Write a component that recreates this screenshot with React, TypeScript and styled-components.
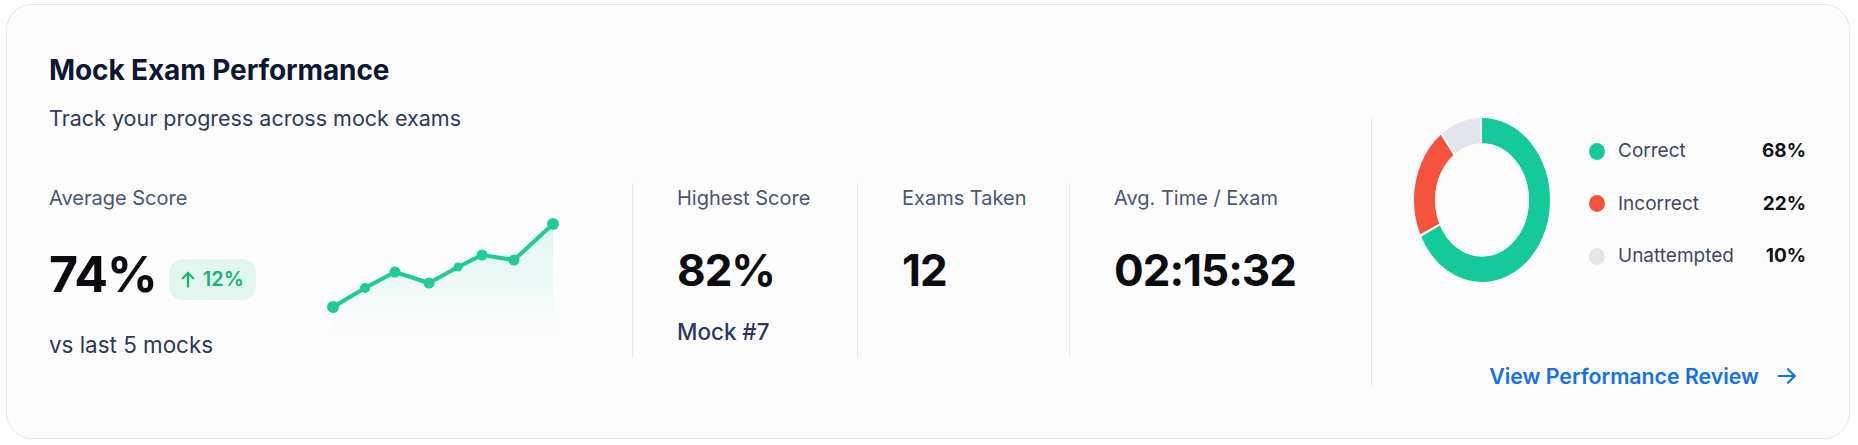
import React from "react";
import styled, { createGlobalStyle } from "styled-components";

const GlobalStyle = createGlobalStyle`
  html, body {
    margin: 0;
    padding: 0;
    background: #ffffff;
  }
  body {
    font-family: Inter, "Noto Sans", sans-serif;
    -webkit-font-smoothing: antialiased;
  }
`;

const Card = styled.section`
  box-sizing: border-box;
  margin: 4px 8px 0 6px;
  height: 435px;
  border: 1px solid #e1e8f2;
  border-radius: 26px;
  background: #fdfdfe;
  display: flex;
  padding: 48px 43px 0 42px;
`;

const Main = styled.div`
  flex: 1;
  display: flex;
  flex-direction: column;
  min-width: 0;
`;

const Title = styled.h2`
  margin: 0;
  font-size: 28px;
  line-height: 34px;
  font-weight: 700;
  color: #0f1631;
  letter-spacing: -0.1px;
`;

const Subtitle = styled.p`
  margin: 18px 0 0;
  font-size: 21.5px;
  line-height: 26px;
  font-weight: 400;
  color: #2e3a56;
`;

const Metrics = styled.div`
  margin-top: 52px;
  height: 168px;
  display: grid;
  grid-template-columns: 583px 225px 212px 1fr;
`;

const Stat = styled.div<{ $divided?: boolean }>`
  box-sizing: border-box;
  padding-top: 3px;
  padding-left: ${(p) => (p.$divided ? "44px" : "0")};
  border-left: ${(p) => (p.$divided ? "1px solid #e6eaf0" : "none")};
  display: flex;
  flex-direction: column;
`;

const AverageStat = styled.div`
  display: flex;
  align-items: flex-start;
`;

const AverageText = styled.div`
  width: 271px;
  padding-top: 3px;
  display: flex;
  flex-direction: column;
`;

const Label = styled.div`
  font-size: 20px;
  line-height: 24px;
  color: #4b5670;
`;

const Value = styled.div<{ $size: number; $lh: number }>`
  margin-top: 36px;
  font-size: ${(p) => p.$size}px;
  line-height: ${(p) => p.$lh}px;
  font-weight: 700;
  color: #0b0c10;
  letter-spacing: -1px;
`;

const ValueRow = styled.div`
  margin-top: 36px;
  display: flex;
  align-items: center;
  gap: 12px;
`;

const Badge = styled.span`
  margin-top: 10px;
  height: 41px;
  box-sizing: border-box;
  padding: 0 12px;
  border-radius: 14px;
  background: #e2f7ee;
  color: #13b476;
  display: inline-flex;
  align-items: center;
  gap: 8px;
  font-size: 20px;
  font-weight: 600;
`;

const Note = styled.div<{ $gap: number; $tone: string; $weight?: number }>`
  margin-top: ${(p) => p.$gap}px;
  font-size: 22.4px;
  line-height: 26px;
  font-weight: ${(p) => p.$weight ?? 400};
  color: ${(p) => p.$tone};
`;

const Spark = styled.svg`
  margin-top: 31px;
  flex: none;
`;

const Breakdown = styled.aside`
  box-sizing: border-box;
  width: 435px;
  height: 268px;
  margin-top: 65px;
  padding-left: 42px;
  border-left: 1px solid #e6eaf0;
  display: flex;
  flex-direction: column;
`;

const ChartRow = styled.div`
  display: flex;
  align-items: center;
  gap: 39px;
`;

const Legend = styled.div`
  width: 217px;
  padding-top: 7px;
  display: grid;
  grid-template-columns: 16px 1fr auto;
  column-gap: 13px;
  row-gap: 28.5px;
  align-items: center;
`;

const Dot = styled.span<{ $color: string }>`
  width: 16px;
  height: 17px;
  border-radius: 50%;
  background: ${(p) => p.$color};
`;

const LegendLabel = styled.span`
  font-size: 19px;
  line-height: 24px;
  color: #3d4763;
`;

const LegendValue = styled.span`
  font-size: 19px;
  line-height: 24px;
  font-weight: 700;
  color: #111216;
  text-align: right;
`;

const LinkRow = styled.div`
  margin-top: auto;
  padding-right: 9px;
  display: flex;
  justify-content: flex-end;
`;

const ReviewLink = styled.a`
  display: inline-flex;
  align-items: center;
  gap: 18px;
  font-size: 21.3px;
  line-height: 20px;
  font-weight: 600;
  color: #1570ef;
  text-decoration: none;
  cursor: pointer;
`;

const trend: Array<[number, number, number]> = [
  [13, 93, 6],
  [45, 74, 5],
  [75, 58, 5.5],
  [109, 69, 5.5],
  [138, 53, 4.5],
  [162, 41, 5.5],
  [194, 46, 5.5],
  [233, 10, 6],
];

function Sparkline() {
  const line = trend.map(([x, y], i) => `${i ? "L" : "M"}${x},${y}`).join(" ");
  const area = `${line} L233,122 L13,122 Z`;
  return (
    <Spark width="250" height="125" viewBox="0 0 250 125">
      <defs>
        <linearGradient id="trendFill" x1="0" y1="0" x2="0" y2="1">
          <stop offset="0" stopColor="#1fcb98" stopOpacity="0.14" />
          <stop offset="1" stopColor="#1fcb98" stopOpacity="0" />
        </linearGradient>
      </defs>
      <path d={area} fill="url(#trendFill)" />
      <path d={line} fill="none" stroke="#1fcb98" strokeWidth="4" strokeLinejoin="round" strokeLinecap="round" />
      {trend.map(([x, y, r], i) => (
        <circle key={i} cx={x} cy={y} r={r} fill="#1fcb98" />
      ))}
    </Spark>
  );
}

const slices = [
  { label: "Correct", value: 68, color: "#14c99a" },
  { label: "Incorrect", value: 22, color: "#f5533d" },
  { label: "Unattempted", value: 10, color: "#e2e6ec" },
];

function Donut() {
  const r = 42.3;
  const c = 2 * Math.PI * r;
  const gap = 1.4;
  let start = 0;
  return (
    <svg width="136" height="164" viewBox="0 0 100 100" preserveAspectRatio="none">
      <g transform="rotate(-90 50 50)">
        {slices.map((s) => {
          const len = (s.value / 100) * c;
          const el = (
            <circle
              key={s.label}
              cx="50"
              cy="50"
              r={r}
              fill="none"
              stroke={s.color}
              strokeWidth="15.4"
              strokeDasharray={`${len - gap} ${c}`}
              strokeDashoffset={-start}
            />
          );
          start += len;
          return el;
        })}
      </g>
    </svg>
  );
}

function UpArrow() {
  return (
    <svg width="14" height="17" viewBox="0 0 14 17" fill="none" stroke="currentColor" strokeWidth="2.3" strokeLinecap="round" strokeLinejoin="round">
      <path d="M7 15.5V2" />
      <path d="M1.8 7.2L7 2l5.2 5.2" />
    </svg>
  );
}

function RightArrow() {
  return (
    <svg width="20" height="18" viewBox="0 0 20 18" fill="none" stroke="currentColor" strokeWidth="2.2" strokeLinecap="round" strokeLinejoin="round">
      <path d="M1.5 9h16.5" />
      <path d="M11 2.2L17.8 9 11 15.8" />
    </svg>
  );
}

export default function App() {
  return (
    <>
      <GlobalStyle />
      <Card>
        <Main>
          <Title>Mock Exam Performance</Title>
          <Subtitle>Track your progress across mock exams</Subtitle>
          <Metrics>
            <AverageStat>
              <AverageText>
                <Label>Average Score</Label>
                <ValueRow>
                  <Value $size={50} $lh={56} style={{ marginTop: 0 }}>74%</Value>
                  <Badge>
                    <UpArrow />
                    12%
                  </Badge>
                </ValueRow>
                <Note $gap={30} $tone="#2d3853">vs last 5 mocks</Note>
              </AverageText>
              <Sparkline />
            </AverageStat>
            <Stat $divided>
              <Label>Highest Score</Label>
              <Value $size={44} $lh={48}>82%</Value>
              <Note $gap={25} $tone="#2a3866" $weight={500}>Mock #7</Note>
            </Stat>
            <Stat $divided>
              <Label>Exams Taken</Label>
              <Value $size={44} $lh={48}>12</Value>
            </Stat>
            <Stat $divided>
              <Label>Avg. Time / Exam</Label>
              <Value $size={44} $lh={48}>02:15:32</Value>
            </Stat>
          </Metrics>
        </Main>
        <Breakdown>
          <ChartRow>
            <Donut />
            <Legend>
              {slices.map((s) => (
                <React.Fragment key={s.label}>
                  <Dot $color={s.color} />
                  <LegendLabel>{s.label}</LegendLabel>
                  <LegendValue>{s.value}%</LegendValue>
                </React.Fragment>
              ))}
            </Legend>
          </ChartRow>
          <LinkRow>
            <ReviewLink>
              View Performance Review
              <RightArrow />
            </ReviewLink>
          </LinkRow>
        </Breakdown>
      </Card>
    </>
  );
}
